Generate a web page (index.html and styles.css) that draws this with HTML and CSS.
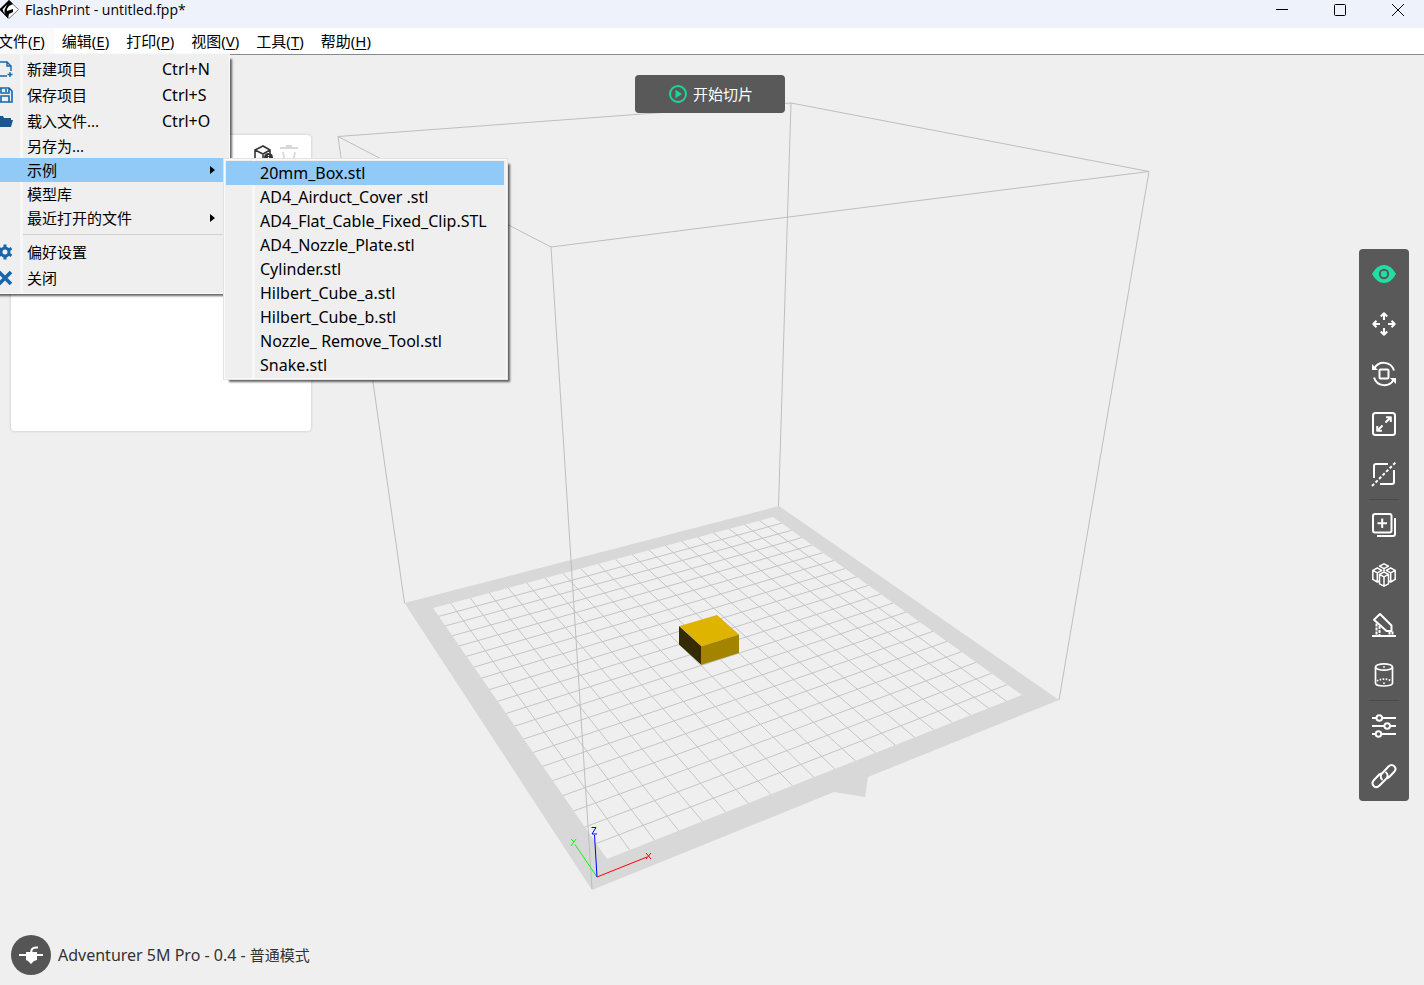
FILE: index.html
```html
<!DOCTYPE html>
<html lang="zh-CN">
<head>
<meta charset="utf-8">
<title>FlashPrint - untitled.fpp*</title>
<link rel="stylesheet" href="styles.css">
</head>
<body>
<div class="app">
  <header class="titlebar">
    <svg class="logo" width="20" height="20" viewBox="0 0 20 20"><path d="M9 .5 18.500 9.500 9 18.500 -.5 9.500z" fill="#fff" stroke="#555" stroke-width=".8"/><path d="M9 0 13 4 9 6 7 9v2l6-2v3L9 14l-1 4.500L-.5 9.500z"/><path d="M2.500 9.500 7 4.500 4.500 10v4z" fill="#fff"/></svg>
    <h1 class="title">FlashPrint - untitled.fpp*</h1>
    <div class="controls">
      <button class="control" aria-label="最小化"><svg width="12" height="12" viewBox="0 0 12 12"><path d="M0 5.500h12"/></svg></button>
      <button class="control" aria-label="最大化"><svg width="12" height="12" viewBox="0 0 12 12"><rect x=".5" y=".5" width="11" height="11" rx="1"/></svg></button>
      <button class="control" aria-label="关闭窗口"><svg width="12" height="12" viewBox="0 0 12 12"><path d="M0 0l12 12M12 0L0 12"/></svg></button>
    </div>
  </header>

  <nav class="menubar">
    <button class="menubar-item is-open">文件(<u>F</u>)</button>
    <button class="menubar-item">编辑(<u>E</u>)</button>
    <button class="menubar-item">打印(<u>P</u>)</button>
    <button class="menubar-item">视图(<u>V</u>)</button>
    <button class="menubar-item">工具(<u>T</u>)</button>
    <button class="menubar-item">帮助(<u>H</u>)</button>
  </nav>

  <main class="viewport">
    <svg class="scene" viewBox="0 55 1424 930" aria-label="打印平台">
      <path fill="#d8d8d8" fill-rule="evenodd" d="M404.500 603 779 506 1059 700 868 777 865 797 834 792 592 890zM433 608 607 859 1022 695 773 517z"/>
      <g id="grid" class="grid"></g>
      <path class="frame" d="M338 136.500 791 103 1149 171.500 551 247zM338 136.500 404.500 603M791 103 778.500 506M1149 171.500 1059 700M551 247 592 889"/>
      <path fill="#dfb400" d="M679.500 626 717 615 739 634.500 701.500 646.500z"/>
      <path fill="#352b00" d="M679 626 701.500 646.500V665L679 644.500z"/>
      <path fill="#a38400" d="M701 646.500 739 634.500V653L701 665z"/>
      <path d="M597 877 575 844.500" stroke="#0f0" fill="none"/>
      <path d="M571 839l3 3M576 839l-5 7" stroke="#0f0" fill="none"/>
      <path d="M597 877 594.500 835M591.500 827.500h4.500l-4 6.500h5" stroke="#00f" fill="none"/>
      <path d="M597 877 647 857M646 853l5 6M651 853l-5 6" stroke="#f00" fill="none"/>
    </svg>

    <section class="panel" aria-label="模型列表">
      <button class="panel-btn" aria-label="模型信息"><svg width="20" height="20" viewBox="0 0 20 20" fill="none" stroke="#333" stroke-width="1.600"><path d="M10 1 2 5v9l8 4 7-4V5zM2 5l8 4 7-4M10 9v9"/><circle cx="15.500" cy="12.500" r="4.500" fill="#333" stroke="none"/><path d="M15.500 10v1M15.500 12v3" stroke="#fff" stroke-width="1.200"/></svg></button>
      <button class="panel-btn" aria-label="删除"><svg width="20" height="20" viewBox="0 0 20 20" fill="none" stroke="#d8d8da" stroke-width="1.800"><path d="M1 3h18M7 1h6M4 7l2 11h8l2-11"/></svg></button>
    </section>

    <button class="slice"><svg width="18" height="18" viewBox="0 0 18 18"><circle cx="9" cy="9" r="8" fill="none" stroke="#1bd69b" stroke-width="2"/><path d="M6.500 4.800v8.400l6.500-4.200z" fill="#1bd69b"/></svg>开始切片</button>

    <aside class="toolbar">
      <button class="tool" aria-label="视角"><svg viewBox="0 0 24 24"><path d="M0 12Q5 3 12 3t12 9Q19 21 12 21T0 12z" fill="#1fdfa4" stroke="none"/><circle cx="12" cy="12" r="4.200" stroke="#595959" stroke-width="2"/></svg></button>
      <button class="tool" aria-label="移动"><svg viewBox="0 0 24 24"><path d="M12 8V1.500M8.800 4.500 12 1.300l3.200 3.200M12 16v6.500M8.800 19.500l3.200 3.200 3.200-3.200M8 12H1.500M4.500 8.800 1.300 12l3.200 3.200M16 12h6.500M19.500 8.800l3.200 3.200-3.200 3.200"/></svg></button>
      <button class="tool" aria-label="旋转"><svg viewBox="0 0 24 24"><rect x="7.500" y="7.500" width="9" height="9" rx="1"/><path d="M2.500 6C7-1.500 19-1 22 8.500M21.500 18C17 25.500 5 25 2 15.500"/><path d="M0 2v6h6zM24 22v-6h-6z" fill="#fff" stroke="none"/></svg></button>
      <button class="tool" aria-label="缩放"><svg viewBox="0 0 24 24"><rect x="1" y="1" width="22" height="22" rx="2.500"/><path d="M13.500 10.500 18 6M10.500 13.500 6 18M14 5.200h4.800V10M5.200 14v4.800H10"/></svg></button>
      <button class="tool" aria-label="切割"><svg viewBox="0 0 24 24"><path d="M16 2H4Q2 2 2 4v12M22 8v12q0 2-2 2H8"/><path d="M0 24 24 0" stroke-dasharray="3 2"/></svg></button>
      <hr class="tool-rule">
      <button class="tool" aria-label="复制"><svg viewBox="0 0 24 24"><rect x="1" y="1" width="18.500" height="18.500" rx="2"/><path d="M10.200 5.500v9.500M5.500 10.200H15M23 5v16q0 2-2 2H5"/></svg></button>
      <button class="tool" aria-label="自动布局"><svg class="fine" viewBox="0 0 24 24"><path d="M12 .8l4.500 2.400-4.500 2.400-4.500-2.400zM5.300 5l4.500 2.400-4.500 2.400L.8 7.400zM18.700 5l4.500 2.400-4.500 2.400-4.500-2.400zM12 9l4.500 2.400-4.500 2.400-4.500-2.400zM.8 7.400v9l4.500 2.600V9.800M23.200 7.400v9L18.700 19V9.800M7.500 11.400v9.400l4.500 2.400 4.500-2.400v-9.400M12 13.800v9.400M5.300 19l2.200-1M18.700 19l-2.200-1M12 5.600V9"/></svg></button>
      <button class="tool" aria-label="支撑"><svg viewBox="0 0 24 24"><path d="M8 1 19.500 12.500v5.500h-5L2 6.800zM0 23h24"/><path d="M4.500 10.500V22M7.500 13v9M17.500 18.500V22M20.500 18.500V22" stroke-dasharray="3 1"/></svg></button>
      <button class="tool" aria-label="打印体"><svg class="medium" viewBox="0 0 24 24"><ellipse cx="12" cy="4" rx="8.500" ry="3.200"/><path d="M3.500 4v16c0 4 17 4 17 0V4"/><path d="M5 18c3-2.500 11-2.500 14 0M12 3.200v1.600M12 19.500v1.600" stroke-dasharray="1.600 1.400"/></svg></button>
      <hr class="tool-rule">
      <button class="tool" aria-label="参数设置"><svg viewBox="0 0 24 24"><path d="M0 4h4.500M10 4h14M0 12h12.500M18 12h6M0 20h4M9 20h15"/><circle cx="7.300" cy="4" r="2.800"/><circle cx="15.200" cy="12" r="2.800"/><circle cx="6.500" cy="20" r="2.800"/></svg></button>
      <button class="tool" aria-label="连接"><svg viewBox="0 0 24 24"><path d="M10.500 16C8 14 8.500 11 10 9.500L16.500 2.500c4-3.800 9.500 1.200 5.500 5.500L17 13.200q-1.500 1.300-3 1.300M13.500 8c3 2 2.500 5 .5 7L7.500 21.500C3.500 25.500-2 20.500 2 16L7 10.800q1-1 2.500-1.200"/></svg></button>
    </aside>

    <footer class="printer">
      <svg width="40" height="40" viewBox="0 0 40 40"><circle cx="20" cy="20" r="20" fill="#555"/><path d="M8 19h24v2H8zM15 17h11v8l-3 1-3 3-3-3-2-1z" fill="#fff"/><path d="M20.500 18c-1-4 2-6 6.500-5.500" fill="none" stroke="#fff" stroke-width="2"/></svg>
      <span class="latin">Adventurer 5M Pro - 0.4 - <span class="mode">普通模式</span></span>
    </footer>

    <ul class="menu file-menu">
      <li><button class="row tall"><svg class="icon" viewBox="0 0 16 16"><path d="M10 15H1V1h9l4 4v5M10 1v4h4M13 11v5M10.500 13.500h5" fill="none" stroke="#1766ad" stroke-width="1.400"/></svg><span>新建项目</span><kbd class="latin">Ctrl+N</kbd></button></li>
      <li><button class="row tall"><svg class="icon" viewBox="0 0 16 16"><path d="M1 1h11l3 3v11H1zM4 1v5h8V1M4 15V9h8v6M9 2v3" fill="none" stroke="#1766ad" stroke-width="1.600"/></svg><span>保存项目</span><kbd class="latin">Ctrl+S</kbd></button></li>
      <li><button class="row tall"><svg class="icon" viewBox="0 0 16 16"><path d="M0 3h6l1 2h7v2h2l-2 7H0z" fill="#1a5692"/></svg><span>载入文件...</span><kbd class="latin">Ctrl+O</kbd></button></li>
      <li><button class="row"><span>另存为...</span></button></li>
      <li class="has-sub">
        <button class="row is-active"><span>示例</span><i class="arrow"></i></button>
        <ul class="menu submenu latin">
          <li><button class="row is-active">20mm_Box.stl</button></li>
          <li><button class="row">AD4_Airduct_Cover .stl</button></li>
          <li><button class="row">AD4_Flat_Cable_Fixed_Clip.STL</button></li>
          <li><button class="row">AD4_Nozzle_Plate.stl</button></li>
          <li><button class="row">Cylinder.stl</button></li>
          <li><button class="row">Hilbert_Cube_a.stl</button></li>
          <li><button class="row">Hilbert_Cube_b.stl</button></li>
          <li><button class="row">Nozzle_ Remove_Tool.stl</button></li>
          <li><button class="row">Snake.stl</button></li>
        </ul>
      </li>
      <li><button class="row"><span>模型库</span></button></li>
      <li><button class="row"><span>最近打开的文件</span><i class="arrow"></i></button></li>
      <li class="rule"></li>
      <li><button class="row tall"><svg class="icon" viewBox="0 0 16 16"><g stroke="#1766ad" fill="none"><circle cx="8" cy="8" r="4" stroke-width="3"/><path d="M8 .5v3M8 12.500v3M1.500 4.200 4 5.700M12 10.300l2.500 1.500M1.500 11.800 4 10.300M12 5.700l2.500-1.500" stroke-width="3"/></g></svg><span>偏好设置</span></button></li>
      <li><button class="row tall"><svg class="icon" viewBox="0 0 16 16"><path d="M2 2l12 12M14 2 2 14" stroke="#1766ad" stroke-width="3.600"/></svg><span>关闭</span></button></li>
    </ul>
  </main>
</div>
<script src="grid.js"></script>
</body>
</html>
```
FILE: styles.css
```css
* { box-sizing: border-box; }
body {
  margin: 0;
  overflow: hidden;
  background: #efefef;
  color: #000;
  font: 15px/24px "Noto Sans", "Noto Sans CJK SC", sans-serif;
}
button {
  margin: 0;
  padding: 0;
  border: 0;
  background: none;
  color: inherit;
  font: inherit;
}
svg { flex: none; }
.latin { font-size: 16px; }
.app { display: flex; flex-direction: column; height: 100vh; }

.titlebar {
  display: flex;
  align-items: center;
  height: 28px;
  padding-bottom: 9px;
  background: #eef2fa;
}
.title {
  flex: 1;
  margin: 0;
  padding-left: 5px;
  font: 14px/20px "Open Sans", "Noto Sans", sans-serif;
}
.controls { display: flex; margin-right: -3px; }
.control {
  display: flex;
  align-items: center;
  justify-content: center;
  width: 58px;
  height: 18px;
}
.control svg { fill: none; stroke: #000; stroke-width: 1; }

.menubar {
  display: flex;
  height: 27px;
  border-bottom: 1px solid #848b95;
  background: #fff;
}
.menubar-item { padding: 0 9px 0 8px; white-space: nowrap; }
.menubar-item:first-child { margin-left: -10px; }
.menubar-item.is-open { background: #fafafa; }
u { text-underline-offset: 2px; }

.viewport { position: relative; flex: 1; min-height: 0; }
.scene { display: block; width: 100%; height: 100%; }
.grid path { fill: none; stroke: #c5c5c5; }
.frame { fill: none; stroke: #bebebe; }

.panel {
  position: absolute;
  top: 80px;
  left: 11px;
  display: flex;
  justify-content: flex-end;
  align-items: flex-start;
  gap: 6px;
  width: 300px;
  height: 296px;
  padding: 10px 12px;
  border-radius: 4px;
  background: #fff;
  box-shadow: 0 0 3px rgba(0, 0, 0, .2);
}
.panel-btn { display: flex; }

.slice {
  position: absolute;
  top: 20px;
  left: calc(50% - 77px);
  display: flex;
  align-items: center;
  justify-content: center;
  gap: 6px;
  width: 150px;
  height: 38px;
  padding-left: 2px;
  border-radius: 4px;
  background: #595959;
  color: #fff;
}

.toolbar {
  position: absolute;
  top: 194px;
  right: 15px;
  width: 50px;
  border-radius: 4px;
  background: #595959;
}
.tool {
  display: flex;
  align-items: center;
  justify-content: center;
  width: 50px;
  height: 50px;
}
.tool svg {
  width: 24px;
  height: 24px;
  overflow: visible;
  fill: none;
  stroke: #fff;
  stroke-width: 2;
  stroke-linejoin: round;
}
.tool .fine { stroke-width: 1.5; }
.tool .medium { stroke-width: 1.7; }
.tool-rule { height: 1px; margin: 0 10px; border: 0; background: #494949; }

.printer {
  position: absolute;
  bottom: 10px;
  left: 11px;
  display: flex;
  align-items: center;
  gap: 7px;
  color: #333;
}
.mode { font-size: 15px; }

.menu {
  position: absolute;
  margin: 0;
  padding: 2px 6px 2px 2px;
  border: 1px solid #f9f9f9;
  background: linear-gradient(90deg, transparent 28px, #f7f7f7 28px, #f7f7f7 31px, transparent 31px) #efefef;
  box-shadow: 4px 4px 2px -2px rgba(0, 0, 0, .6);
  list-style: none;
}
.file-menu { top: -2px; left: -9px; width: 239px; }
.submenu {
  top: 0;
  left: 100%;
  width: 285px;
  padding: 2px 3px 2px 2px;
  border-color: #e2e2e2;
  box-shadow: inset 0 0 0 1px #fafafa, 4px 4px 2px -2px rgba(0, 0, 0, .6);
}
.has-sub { position: relative; }
.row {
  display: grid;
  grid-template-columns: 16px 1fr 61px;
  column-gap: 14px;
  align-items: center;
  width: 100%;
  height: 24px;
  padding-left: 3px;
  text-align: left;
  white-space: nowrap;
}
.row.tall { height: 26px; }
.row span { grid-column: 2; }
.row kbd { font-family: inherit; }
.row.is-active { background: #91c9f7; }
.icon { width: 16px; height: 16px; overflow: visible; }
.arrow {
  justify-self: end;
  margin-right: 8px;
  border: 4px solid transparent;
  border-left: 5px solid #000;
  border-right: 0;
}
.submenu .row { display: block; padding-left: 34px; }
.rule {
  height: 9px;
  margin-left: 29px;
  background: linear-gradient(#d2d2d2, #d2d2d2) 0 4px / 100% 1px no-repeat;
}
```
FILE: grid.js
```js
// Projects the build-plate grid onto the plate's four corners.
const front = [607, 859], right = [1022, 695], back = [773, 517], left = [433, 608];
const CELLS = 19.8, EDGE = 0.9;

const d = [0, 1].map(i => [right[i] - back[i], left[i] - back[i], front[i] - right[i] + back[i] - left[i]]);
const det = d[0][0] * d[1][1] - d[0][1] * d[1][0];
const g = (d[0][2] * d[1][1] - d[0][1] * d[1][2]) / det;
const h = (d[0][0] * d[1][2] - d[0][2] * d[1][0]) / det;

function project(u, v) {
  const w = 1 + g * u + h * v;
  return [0, 1].map(i =>
    ((front[i] + u * (right[i] * (1 + g) - front[i]) + v * (left[i] * (1 + h) - front[i])) / w).toFixed(1)
  ).join(' ');
}

const grid = document.getElementById('grid');
for (let k = 0; k < 19; k++) {
  const t = (EDGE + k) / CELLS;
  for (const [a, b] of [[[t, 0], [t, 1]], [[0, t], [1, t]]]) {
    const line = document.createElementNS('http://www.w3.org/2000/svg', 'path');
    line.setAttribute('d', `M${project(...a)}L${project(...b)}`);
    grid.append(line);
  }
}
```
